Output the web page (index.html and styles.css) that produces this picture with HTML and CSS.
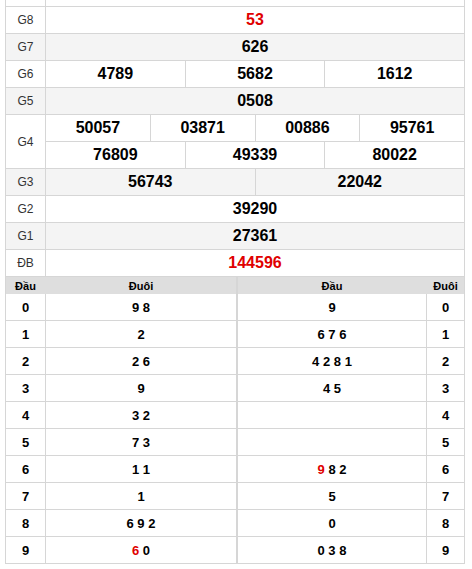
FILE: index.html
```html
<!DOCTYPE html>
<html>
<head>
<meta charset="utf-8">
<link rel="stylesheet" href="styles.css">
</head>
<body>
<div class="wrap">
  <div class="res">
    <div class="row top"><div class="lbl"></div><div class="vals"></div></div>
    <div class="row"><div class="lbl">G8</div><div class="vals"><div class="n red">53</div></div></div>
    <div class="row alt"><div class="lbl">G7</div><div class="vals"><div class="n">626</div></div></div>
    <div class="row"><div class="lbl">G6</div><div class="vals"><div class="n">4789</div><div class="n">5682</div><div class="n">1612</div></div></div>
    <div class="row alt"><div class="lbl">G5</div><div class="vals"><div class="n">0508</div></div></div>
    <div class="row"><div class="lbl">G4</div>
      <div class="multi">
        <div class="vals sub"><div class="n">50057</div><div class="n">03871</div><div class="n">00886</div><div class="n">95761</div></div>
        <div class="vals"><div class="n">76809</div><div class="n">49339</div><div class="n">80022</div></div>
      </div>
    </div>
    <div class="row alt"><div class="lbl">G3</div><div class="vals"><div class="n">56743</div><div class="n">22042</div></div></div>
    <div class="row"><div class="lbl">G2</div><div class="vals"><div class="n">39290</div></div></div>
    <div class="row alt"><div class="lbl">G1</div><div class="vals"><div class="n">27361</div></div></div>
    <div class="row"><div class="lbl">ĐB</div><div class="vals"><div class="n red">144596</div></div></div>
  </div>
  <div class="loto">
    <div class="lt left">
      <div class="lr head"><div class="c1">Đầu</div><div class="c2">Đuôi</div></div>
      <div class="lr"><div class="c1">0</div><div class="c2"><span>9 8</span></div></div>
      <div class="lr"><div class="c1">1</div><div class="c2"><span>2</span></div></div>
      <div class="lr"><div class="c1">2</div><div class="c2"><span>2 6</span></div></div>
      <div class="lr"><div class="c1">3</div><div class="c2"><span>9</span></div></div>
      <div class="lr"><div class="c1">4</div><div class="c2"><span>3 2</span></div></div>
      <div class="lr"><div class="c1">5</div><div class="c2"><span>7 3</span></div></div>
      <div class="lr"><div class="c1">6</div><div class="c2"><span>1 1</span></div></div>
      <div class="lr"><div class="c1">7</div><div class="c2"><span>1</span></div></div>
      <div class="lr"><div class="c1">8</div><div class="c2"><span>6 9 2</span></div></div>
      <div class="lr"><div class="c1">9</div><div class="c2"><span><span class="red">6</span> 0</span></div></div>
    </div>
    <div class="lt right">
      <div class="lr head"><div class="c2">Đầu</div><div class="c1">Đuôi</div></div>
      <div class="lr"><div class="c2"><span>9</span></div><div class="c1">0</div></div>
      <div class="lr"><div class="c2"><span>6 7 6</span></div><div class="c1">1</div></div>
      <div class="lr"><div class="c2"><span>4 2 8 1</span></div><div class="c1">2</div></div>
      <div class="lr"><div class="c2"><span>4 5</span></div><div class="c1">3</div></div>
      <div class="lr"><div class="c2"></div><div class="c1">4</div></div>
      <div class="lr"><div class="c2"></div><div class="c1">5</div></div>
      <div class="lr"><div class="c2"><span><span class="red">9</span> 8 2</span></div><div class="c1">6</div></div>
      <div class="lr"><div class="c2"><span>5</span></div><div class="c1">7</div></div>
      <div class="lr"><div class="c2"><span>0</span></div><div class="c1">8</div></div>
      <div class="lr"><div class="c2"><span>0 3 8</span></div><div class="c1">9</div></div>
    </div>
  </div>
</div>
</body>
</html>
```

FILE: styles.css
```css
* { box-sizing: border-box; }
body {
  margin: 0;
  font-family: "Liberation Sans", Arial, sans-serif;
  color: #000;
  background: #fff;
}
.wrap {
  margin-left: 5px;
  width: 460px;
}
.res {
  border-left: 1px solid #d6d6d6;
  border-right: 1px solid #d6d6d6;
}
.row {
  display: grid;
  grid-template-columns: 40px 1fr;
  border-bottom: 1px solid #d6d6d6;
  min-height: 27px;
}
.row.top { min-height: 7px; height: 7px; }
.row.top .vals { height: 6px; }
.row.alt { background: #f4f4f4; }
.lbl {
  border-right: 1px solid #d6d6d6;
  display: flex;
  align-items: center;
  justify-content: center;
  font-size: 12px;
  color: #333;
}
.vals {
  display: flex;
  height: 26px;
}
.multi { display: flex; flex-direction: column; }
.vals.sub { border-bottom: 1px solid #d6d6d6; height: 27px; }
.n {
  flex: 1;
  display: flex;
  align-items: center;
  justify-content: center;
  font-size: 16px;
  font-weight: bold;
}
.n + .n { border-left: 1px solid #d6d6d6; }
.red { color: #e00000; }

.loto {
  display: flex;
}
.lt {
  border-left: 1px solid #d6d6d6;
  border-right: 1px solid #d6d6d6;
}
.lt.left { width: 232px; }
.lt.right { width: 228px; }
.lr {
  display: grid;
  height: 27px;
  border-bottom: 1px solid #d6d6d6;
  font-size: 13px;
  font-weight: bold;
}
.left .lr { grid-template-columns: 40px 1fr; }
.right .lr { grid-template-columns: 1fr 37px; }
.lr.head {
  height: 17px;
  background: #dedede;
  font-size: 11px;
  border-bottom: none;
}
.lr > div {
  display: flex;
  align-items: center;
  justify-content: center;
}
.left .c1 { border-right: 1px solid #d6d6d6; }
.right .c2 { border-right: 1px solid #d6d6d6; }
.head > div { border-right-color: #dedede !important; }
```
